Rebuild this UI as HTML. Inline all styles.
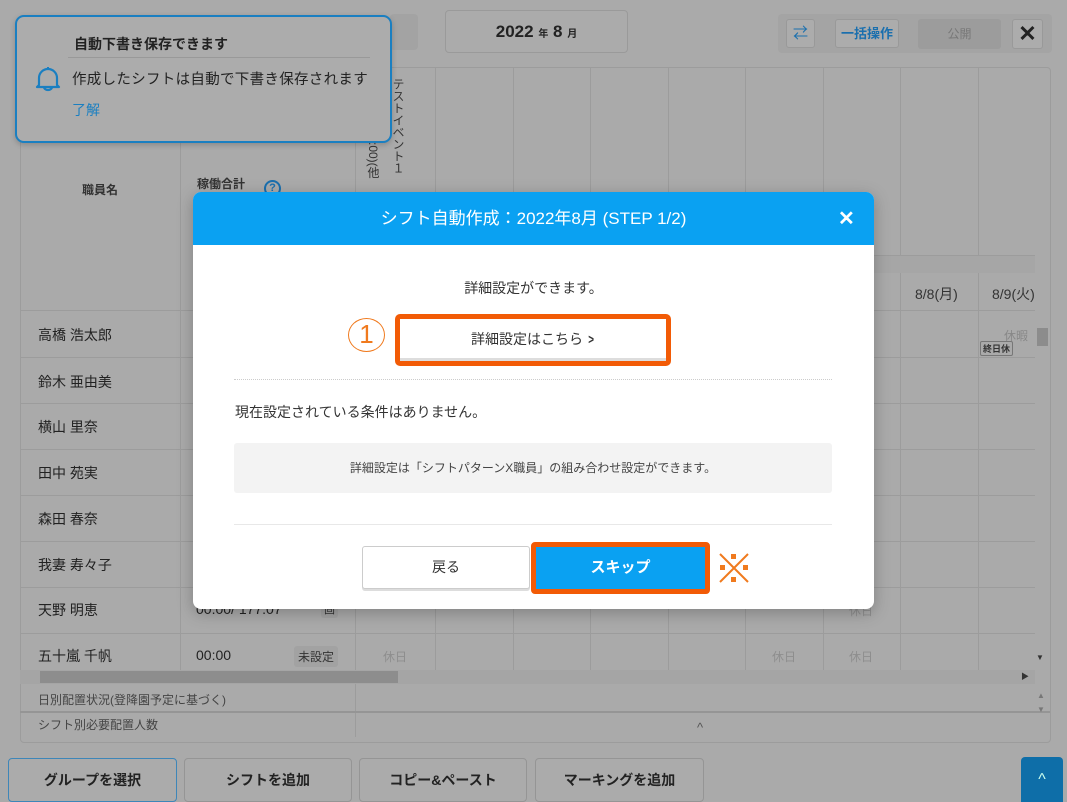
<!DOCTYPE html>
<html style="background:#aaaaaa"><head><meta charset="utf-8"><style>
*{box-sizing:border-box;margin:0;padding:0}
body{width:1067px;height:800px;overflow:hidden;background:#aaaaaa;font-family:"Liberation Sans","Noto Sans CJK JP",sans-serif;color:#2a2a2a;position:relative}
.a{position:absolute}
.vl{position:absolute;width:1px;background:#9c9c9c}
.hl{position:absolute;height:1px;background:#9c9c9c}
.nm{position:absolute;left:38px;font-size:14px;color:#222}
.btm{position:absolute;top:758px;height:44px;border:1px solid #959595;border-radius:4px;background:#ababab;font-size:14px;font-weight:bold;text-align:center;line-height:42px;color:#222}
.gh{position:absolute;font-size:12px;color:#8e8e8e}
.vt{position:absolute;font-size:12px;color:#333;writing-mode:vertical-rl;text-orientation:mixed;white-space:nowrap;line-height:14px}
</style></head><body>
<div class="a" style="left:0;top:0;width:1067px;height:800px;background:#aaaaaa"></div>
<div class="a" style="left:390px;top:14px;width:28px;height:36px;background:#a3a3a3;border-radius:4px"></div>
<div class="a" style="left:445px;top:10px;width:183px;height:43px;border:1px solid #9a9a9a;border-radius:4px;background:#ababab;text-align:center;line-height:42px;font-weight:bold;font-size:17px;color:#222">2022 <span style="font-size:10px">年</span> 8 <span style="font-size:10px">月</span></div>
<div class="a" style="left:778px;top:14px;width:274px;height:39px;background:#a4a4a4;border-radius:4px"></div>
<div class="a" style="left:786px;top:19px;width:29px;height:29px;border:1px solid #999;border-radius:3px;background:#acacac;color:#1a6fae;font-size:15px;text-align:center;line-height:27px">⇄</div>
<div class="a" style="left:835px;top:19px;width:64px;height:29px;border:1px solid #999;border-radius:3px;background:#acacac;color:#1a6fae;font-size:13px;font-weight:bold;text-align:center;line-height:27px">一括操作</div>
<div class="a" style="left:918px;top:19px;width:83px;height:30px;border-radius:3px;background:#9c9c9c;color:#777;font-size:12px;text-align:center;line-height:30px">公開</div>
<div class="a" style="left:1012px;top:19px;width:31px;height:30px;border:1px solid #999;border-radius:3px;background:#acacac;color:#222;font-size:22px;font-weight:bold;text-align:center;line-height:28px">✕</div>
<div class="a" style="left:20px;top:67px;width:1031px;height:676px;border:1px solid #9c9c9c;border-radius:4px"></div>
<div class="vl" style="left:180px;top:67px;height:616px"></div>
<div class="vl" style="left:355px;top:67px;height:670px"></div>
<div class="vl" style="left:435px;top:67px;height:616px"></div>
<div class="vl" style="left:513px;top:67px;height:616px"></div>
<div class="vl" style="left:590px;top:67px;height:616px"></div>
<div class="vl" style="left:668px;top:67px;height:616px"></div>
<div class="vl" style="left:745px;top:67px;height:616px"></div>
<div class="vl" style="left:823px;top:67px;height:616px"></div>
<div class="vl" style="left:900px;top:67px;height:616px"></div>
<div class="vl" style="left:978px;top:67px;height:616px"></div>
<div class="a" style="left:355px;top:255px;width:680px;height:18px;background:#a6a6a6"></div>
<div class="hl" style="left:355px;top:255px;width:680px"></div>
<div class="hl" style="left:20px;top:310px;width:1015px"></div>
<div class="hl" style="left:20px;top:357px;width:1015px"></div>
<div class="hl" style="left:20px;top:403px;width:1015px"></div>
<div class="hl" style="left:20px;top:449px;width:1015px"></div>
<div class="hl" style="left:20px;top:495px;width:1015px"></div>
<div class="hl" style="left:20px;top:541px;width:1015px"></div>
<div class="hl" style="left:20px;top:587px;width:1015px"></div>
<div class="hl" style="left:20px;top:633px;width:1015px"></div>
<div class="a" style="left:82px;top:181px;font-size:12px;font-weight:bold;color:#333">職員名</div>
<div class="a" style="left:197px;top:175px;font-size:12px;font-weight:bold;color:#333">稼働合計</div>
<div class="a" style="left:264px;top:180px;width:17px;height:17px;border:2px solid #1a6fae;border-radius:50%;color:#1a6fae;font-size:11px;font-weight:bold;text-align:center;line-height:13px">?</div>
<div class="vt" style="left:391px;top:78px">テストイベント１</div>
<div class="vt" style="left:366px;top:142px">:00)(他</div>
<div class="a" style="left:915px;top:284px;font-size:14px;color:#333">8/8(月)</div>
<div class="a" style="left:992px;top:284px;font-size:14px;color:#333">8/9(火)</div>
<div class="a" style="left:1004px;top:327px;font-size:12px;color:#888">休暇</div>
<div class="a" style="left:980px;top:341px;font-size:9px;border:1px solid #777;border-radius:2px;padding:0 2px;font-weight:bold;color:#333">終日休</div>
<div class="a" style="left:1037px;top:328px;width:11px;height:18px;background:#8c8c8c"></div>
<div class="nm" style="top:325px">高橋 浩太郎</div>
<div class="nm" style="top:372px">鈴木 亜由美</div>
<div class="nm" style="top:417px">横山 里奈</div>
<div class="nm" style="top:463px">田中 苑実</div>
<div class="nm" style="top:509px">森田 春奈</div>
<div class="nm" style="top:555px">我妻 寿々子</div>
<div class="nm" style="top:600px">天野 明恵</div>
<div class="nm" style="top:646px">五十嵐 千帆</div>
<div class="a" style="left:196px;top:601px;font-size:14px;color:#222">00.00/ 177.07</div>
<div class="a" style="left:196px;top:647px;font-size:14px;color:#222">00:00</div>
<div class="a" style="left:294px;top:646px;font-size:12px;background:#a2a2a2;border-radius:3px;padding:2px 4px;color:#333">未設定</div>
<div class="a" style="left:321px;top:600px;font-size:11px;background:#a2a2a2;border-radius:3px;padding:1px 3px;color:#333">固</div>
<div class="gh" style="left:383px;top:648px">休日</div>
<div class="gh" style="left:772px;top:648px">休日</div>
<div class="gh" style="left:849px;top:648px">休日</div>
<div class="gh" style="left:849px;top:602px">休日</div>
<div class="a" style="left:1036px;top:653px;font-size:8px;color:#333">▼</div>
<div class="a" style="left:20px;top:670px;width:1015px;height:14px;background:#a5a5a5"></div>
<div class="a" style="left:40px;top:671px;width:358px;height:12px;background:#8d8d8d"></div>
<div class="a" style="left:1021px;top:671px;font-size:8px;color:#333">▶</div>
<div class="hl" style="left:20px;top:711px;width:1030px;background:#959595;height:2px"></div>
<div class="a" style="left:38px;top:691px;font-size:12px;color:#444">日別配置状況(登降園予定に基づく)</div>
<div class="a" style="left:38px;top:716px;font-size:12px;color:#444">シフト別必要配置人数</div>
<div class="a" style="left:697px;top:720px;font-size:13px;color:#555">^</div>
<div class="a" style="left:1037px;top:689px;font-size:8px;color:#777;line-height:14px">▲<br>▼</div>
<div class="btm" style="left:8px;width:169px;border-color:#3e86b8">グループを選択</div>
<div class="btm" style="left:184px;width:168px">シフトを追加</div>
<div class="btm" style="left:359px;width:168px">コピー&amp;ペースト</div>
<div class="btm" style="left:535px;width:169px">マーキングを追加</div>
<div class="a" style="left:1021px;top:757px;width:42px;height:45px;background:#0e6ea8;border-radius:4px 4px 0 0;color:#cfe;text-align:center;line-height:45px;font-size:16px">^</div>
<div class="a" style="left:15px;top:15px;width:377px;height:128px;border:2px solid #1a7fc1;border-radius:9px;background:#acacac;box-shadow:0 2px 6px rgba(0,0,0,.2)">
<div class="a" style="left:57px;top:17px;font-size:14px;font-weight:bold;color:#222">自動下書き保存できます</div>
<div class="a" style="left:51px;top:40px;width:302px;height:1px;background:#999"></div>
<svg class="a" style="left:18px;top:48px" width="26" height="28" viewBox="0 0 26 28"><path d="M4 20 L4 13 A9 9 0 0 1 22 13 L22 20 L24 22 L2 22 Z M9 22 A4 3 0 0 0 17 22" fill="none" stroke="#1a7fc1" stroke-width="2.2" stroke-linejoin="round"/><line x1="13" y1="2" x2="13" y2="4" stroke="#1a7fc1" stroke-width="2"/></svg>
<div class="a" style="left:55px;top:51px;font-size:14.5px;letter-spacing:0.3px;color:#222;white-space:nowrap">作成したシフトは自動で下書き保存されます</div>
<div class="a" style="left:55px;top:83px;font-size:14px;color:#1a7fc1">了解</div>
</div>
<div class="a" style="left:193px;top:192px;width:681px;height:417px;background:#fff;border-radius:8px;overflow:hidden;box-shadow:0 4px 16px rgba(0,0,0,.25)">
<div style="height:53px;background:#0aa1f2;color:#fff;font-size:17px;text-align:center;line-height:53px">シフト自動作成：2022年8月 (STEP 1/2)</div>
<div class="a" style="left:645px;top:14px;color:#fff;font-size:20px;font-weight:bold">✕</div>
<div class="a" style="left:0;top:86px;width:681px;text-align:center;font-size:14px;color:#333">詳細設定ができます。</div>
<div class="a" style="left:155px;top:126px;width:37px;height:34px;border:1.5px solid #f07a1e;border-radius:50%;color:#f07a1e;font-size:26px;text-align:center;line-height:31px;font-weight:300">1</div>
<div class="a" style="left:202px;top:122px;width:276px;height:52px;border:5px solid #f25b06;border-radius:5px;background:#fff;text-align:center;line-height:40px;font-size:14px;color:#333;box-shadow:inset 0 -3px 0 #ddd">詳細設定はこちら <span style="display:inline-block;transform:scaleX(.7);font-weight:bold">&gt;</span></div>
<div class="a" style="left:41px;top:187px;width:598px;border-top:1px dotted #ccc"></div>
<div class="a" style="left:42px;top:210px;font-size:14px;color:#333">現在設定されている条件はありません。</div>
<div class="a" style="left:41px;top:251px;width:598px;height:50px;background:#f3f3f3;border-radius:3px;text-align:center;line-height:50px;font-size:12px;color:#444">詳細設定は「シフトパターンX職員」の組み合わせ設定ができます。</div>
<div class="a" style="left:41px;top:332px;width:598px;height:1px;background:#e8e8e8"></div>
<div class="a" style="left:169px;top:354px;width:168px;height:43px;border:1px solid #ccc;border-radius:3px;background:#fff;text-align:center;line-height:41px;font-size:14px;color:#333;box-shadow:0 2px 0 #ddd">戻る</div>
<div class="a" style="left:338px;top:350px;width:179px;height:52px;border:5px solid #f25b06;border-radius:4px;background:#0aa1f2;text-align:center;line-height:42px;font-size:15px;font-weight:bold;color:#fff">スキップ</div>
<svg class="a" style="left:524px;top:360px" width="34" height="32" viewBox="0 0 34 32"><path d="M3 2 L31 30 M31 2 L3 30" stroke="#f07a1e" stroke-width="2"/><rect x="14" y="2" width="5" height="5" fill="#f07a1e"/><rect x="14" y="25" width="5" height="5" fill="#f07a1e"/><rect x="3" y="13" width="5" height="5" fill="#f07a1e"/><rect x="26" y="13" width="5" height="5" fill="#f07a1e"/></svg>
</div>
</body></html>
